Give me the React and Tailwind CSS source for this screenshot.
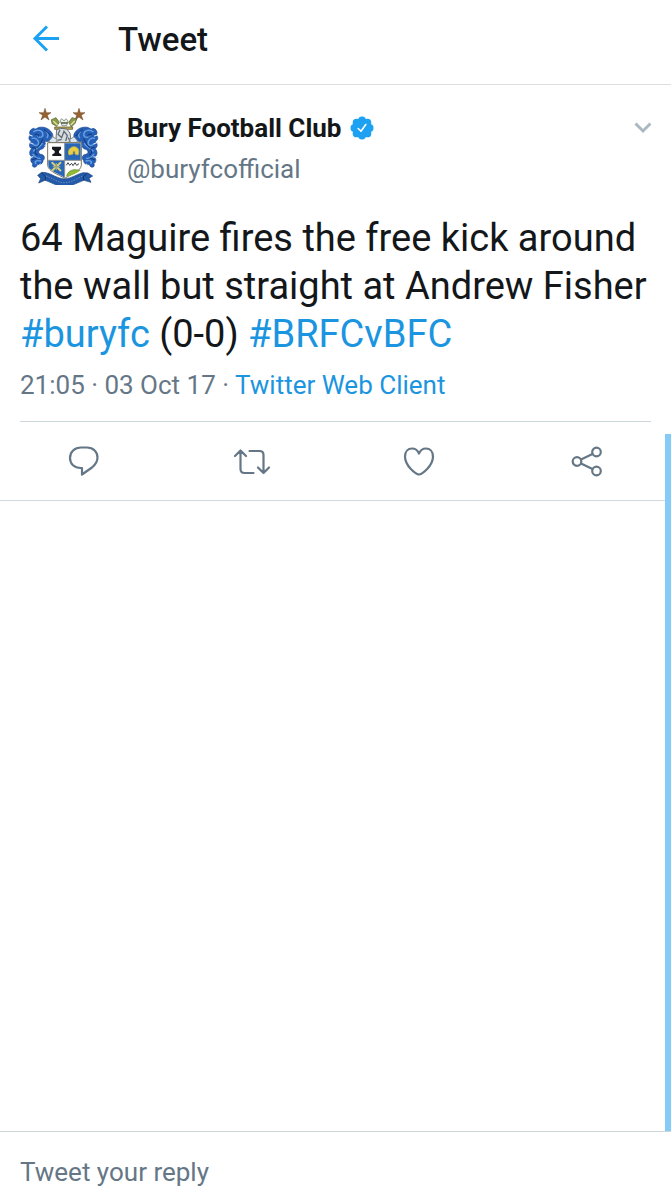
import React from "react";

function Star({ x, y }) {
  return (
    <path
      transform={`translate(${x} ${y})`}
      d="M0-18 4-5 18-5 7 3 12 17 0 8-12 17-7 3-18-5-4-5Z"
      fill="#96622f"
      stroke="#6b4423"
      strokeWidth="1.5"
    />
  );
}

function Mantling() {
  return (
    <g strokeLinecap="round" strokeLinejoin="round">
      <path
        d="M118 112C112 96 96 88 80 91 72 94 70 99 64 94 54 97 50 106 55 114 48 120 50 130 58 134 50 140 51 150 58 155 50 164 52 176 60 180 54 186 55 196 62 200 58 206 62 212 70 210L76 202C84 204 90 200 91 190 98 184 94 172 84 172 74 168 78 158 88 156 98 150 100 140 94 132 104 136 112 132 118 124Z"
        fill="#2460b8"
        stroke="#1d468c"
        strokeWidth="2"
      />
      <path
        d="M64 104C74 96 88 100 90 110 92 120 82 124 76 118M60 124C70 122 78 128 78 138 78 146 68 148 64 142M64 162C72 154 84 148 88 140M62 172C68 178 70 186 82 184M70 200C66 194 72 188 84 192M100 104C106 110 106 116 102 122"
        fill="none"
        stroke="#6a9fe2"
        strokeWidth="4"
      />
      <path
        d="M68 112C76 110 80 114 78 118M90 126C86 134 84 144 74 152M60 152C66 150 72 154 70 160M74 174C68 170 66 166 70 160M94 98C104 104 108 112 112 116M60 188 72 184"
        fill="none"
        stroke="#173a7a"
        strokeWidth="3"
      />
      <path d="M52 136 62 141M78 208 83 201M96 146 100 142M52 182 62 179M54 115 60 117" stroke="#dbe8f7" strokeWidth="3" />
    </g>
  );
}

function Crest() {
  return (
    <svg viewBox="36 24 240 240" className="size-20 shrink-0" role="img" aria-label="Bury Football Club crest">
      <g transform="translate(-9 0) scale(1.06 1)">
        <Mantling />
      </g>
      <g transform="translate(305 0) scale(-1.06 1)">
        <Mantling />
      </g>
      <Star x={93} y={52} />
      <Star x={195} y={52} />
      <path d="M112 68 126 62 136 76 128 88 114 80ZM188 66 174 62 164 76 172 90 184 78Z" fill="#8a9a46" stroke="#4b5c2c" strokeWidth="2" />
      <path d="M118 72 130 84M182 72 170 84" stroke="#e3dfa6" strokeWidth="4" />
      <path d="M138 70 144 65 150 72 156 65 162 72 158 86 144 86Z" fill="#e9ecdf" stroke="#647060" strokeWidth="2" />
      <path d="M141 78H161" stroke="#39482e" strokeWidth="4" />
      <path d="M122 90H176V97H122Z" fill="#b8a650" stroke="#514c2c" strokeWidth="2" />
      <path d="M128 98 140 94 158 96 168 108 171 132 160 137 130 137 126 124Z" fill="#d8dde0" stroke="#535d66" strokeWidth="2.5" />
      <path d="M138 98 132 112 143 122 150 103 160 116 155 132M131 130 143 127M163 122 168 132" fill="none" stroke="#5f6a73" strokeWidth="4" />
      <path d="M106 131 116 119 130 128 125 137H108ZM190 131 180 119 167 128 170 137H188Z" fill="#d9e5f1" stroke="#777f7e" strokeWidth="2.5" />
      <path d="M101 137H202V205C200 224 170 232 152 244 134 232 103 224 101 205Z" fill="#fff" stroke="#77735b" strokeWidth="3" />
      <path d="M152 139H200V190H152ZM103 190H152V242C133 230 103 221 103 205Z" fill="#2866b8" />
      <path d="M152 138V242M102 190H201" stroke="#8e9294" strokeWidth="3" />
      <path d="M114 149H141V157L135 162V168L142 172V177H115V172L122 168V162L114 157Z" fill="#171b20" />
      <path d="M165 174C159 158 171 149 180 149 192 149 198 160 192 174L183 171V163H177V171Z" fill="#e8cd45" stroke="#d3b83c" strokeWidth="2" />
      <path d="M113 196 141 222M141 196 113 222" stroke="#d6cf78" strokeWidth="6" />
      <path d="M127 198V220M116 209H139" stroke="#92a682" strokeWidth="4" />
      <path d="M157 205 162 197 167 205 173 199 177 206 183 197 188 205 195 200" fill="none" stroke="#3d444a" strokeWidth="3" />
      <path d="M158 237C162 219 181 214 197 221 190 229 174 233 158 239Z" fill="#8fba35" />
      <path d="M158 237C162 219 181 214 199 221" fill="none" stroke="#5c7e27" strokeWidth="2" />
      <path
        d="M71 235 83 226 96 227C116 232 129 244 151 246 174 244 189 231 207 227L222 228 236 237 225 244 231 256 210 250C192 256 174 268 151 268 128 268 112 256 93 250L74 258 80 245Z"
        fill="#235aa9"
        stroke="#173d78"
        strokeWidth="2"
        strokeLinejoin="round"
      />
      <path d="M96 237C118 244 130 257 151 257 174 257 190 243 208 237" fill="none" stroke="#8fb0d6" strokeWidth="2" strokeDasharray="4 4" />
      <path d="M83 228 95 240 93 249M219 229 207 240 210 249" fill="none" stroke="#143467" strokeWidth="3" />
    </svg>
  );
}

function Verified() {
  return (
    <svg viewBox="0 0 24 24" className="size-6 shrink-0" role="img" aria-label="Verified account">
      <g fill="#1da1f2">
        <circle cx="12" cy="12" r="9.2" />
        <circle cx="12" cy="4.4" r="3.9" />
        <circle cx="17.4" cy="6.6" r="3.9" />
        <circle cx="19.6" cy="12" r="3.9" />
        <circle cx="17.4" cy="17.4" r="3.9" />
        <circle cx="12" cy="19.6" r="3.9" />
        <circle cx="6.6" cy="17.4" r="3.9" />
        <circle cx="4.4" cy="12" r="3.9" />
        <circle cx="6.6" cy="6.6" r="3.9" />
      </g>
      <path d="M8.2 12.5 11 15.2 15.8 8.5" fill="none" stroke="#fff" strokeWidth="1.6" strokeLinecap="round" strokeLinejoin="round" />
    </svg>
  );
}

function ActionIcon({ children }) {
  return (
    <svg viewBox="0 0 40 40" className="size-10" fill="none" stroke="#657786" strokeWidth="2.2" strokeLinecap="round" strokeLinejoin="round" aria-hidden="true">
      {children}
    </svg>
  );
}

const actions = [
  {
    label: "Reply",
    icon: <path d="M17 6.500H23C29.500 6.500 33.500 11 33.500 16.500 33.500 21 31 24 28 26.500L18 33.500V27H16.500C10.500 27 6 23 6 17S10.500 6.500 17 6.500Z" />,
  },
  {
    label: "Retweet",
    icon: <path d="M3 15 8.500 9.500 14 15M8.500 9.500V28Q8.500 32 12.500 32H21.500M17.500 10H27.500Q31.500 10 31.500 14V32M26 26.500 31.500 32 37 26.500" />,
  },
  {
    label: "Like",
    icon: <path d="M20 33.500C17 33.500 6 25 6 15.500 6 10.500 9 7.500 13 7.500 16.500 7.500 19 10 20 12.500 21 10 23.500 7.500 27 7.500 31 7.500 34 10.500 34 15.500 34 25 23 33.500 20 33.500Z" />,
  },
  {
    label: "Share",
    icon: (
      <>
        <circle cx="10" cy="20.500" r="4.300" />
        <circle cx="29.500" cy="11" r="4.300" />
        <circle cx="29.500" cy="30" r="4.300" />
        <path d="M14 18.500 25.500 13M14 22.500 25.500 28" />
      </>
    ),
  },
];

export default function App() {
  return (
    <div className="flex min-h-screen flex-col bg-white font-['Roboto',sans-serif] text-[#14171a]">
      <header className="flex h-[85px] items-center border-b border-[#dcdfe1] pb-1 pl-7">
        <button type="button" aria-label="Back" className="size-9">
          <svg viewBox="0 0 36 36" className="size-9" fill="none" stroke="#1da1f2" strokeWidth="3" aria-hidden="true">
            <path d="M31 16.500H7M19 4.500 7 16.500 19 28.500" />
          </svg>
        </button>
        <h1 className="ml-[54px] text-[33px] leading-10 font-medium">Tweet</h1>
      </header>

      <main className="relative flex-1">
        <article className="border-b border-[#d3d9dd]">
          <div className="px-5 pt-5">
            <div className="flex items-start pl-1.5">
              <Crest />
              <div className="ml-[21px] flex min-w-0 flex-1 flex-col gap-px pt-[3px]">
                <div className="flex items-center gap-[9px]">
                  <h2 className="text-[26px] leading-10 font-bold">Bury Football Club</h2>
                  <Verified />
                </div>
                <p className="text-[26px] leading-10 text-[#657786]">@buryfcofficial</p>
              </div>
              <button type="button" aria-label="More options" className="mt-3 size-5">
                <svg viewBox="0 0 20 20" className="size-5" fill="none" stroke="#aab8c2" strokeWidth="3" aria-hidden="true">
                  <path d="M4.500 6.500 12 14 19.500 6.500" />
                </svg>
              </button>
            </div>
            <p className="mt-[25px] text-[38px] leading-12">
              64 Maguire fires the free kick around the wall but straight at Andrew Fisher{" "}
              <a href="#buryfc" className="text-[#1b95e0]">#buryfc</a> (0-0){" "}
              <a href="#BRFCvBFC" className="text-[#1b95e0]">#BRFCvBFC</a>
            </p>
            <p className="mt-[7px] text-[26px] leading-10 text-[#657786]">
              21:05 · 03 Oct 17 · <a href="#client" className="text-[#1b95e0]">Twitter Web Client</a>
            </p>
            <hr className="mt-4 border-[#ccd6dd]" />
          </div>
          <div className="grid h-[78px] grid-cols-4 place-items-center">
            {actions.map(({ label, icon }) => (
              <button key={label} type="button" aria-label={label} className="size-10">
                <ActionIcon>{icon}</ActionIcon>
              </button>
            ))}
          </div>
        </article>
        <div className="absolute right-0 bottom-0 h-2/3 w-1.5 bg-[#84ccf7]" aria-hidden="true" />
      </main>

      <footer className="h-[69px] border-t border-[#d0d5d8] px-5">
        <input
          type="text"
          aria-label="Tweet your reply"
          placeholder="Tweet your reply"
          className="h-full w-full pt-3 text-[26px] outline-none placeholder:text-[#657786]"
        />
      </footer>
    </div>
  );
}
